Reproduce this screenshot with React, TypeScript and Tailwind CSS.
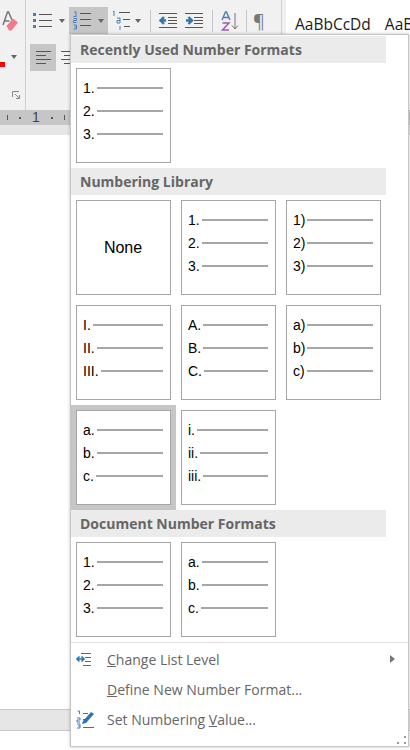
const sans = "font-['Open_Sans',sans-serif]"

const recent = [['1.', '2.', '3.']]
const library = [
  null,
  ['1.', '2.', '3.'],
  ['1)', '2)', '3)'],
  ['I.', 'II.', 'III.'],
  ['A.', 'B.', 'C.'],
  ['a)', 'b)', 'c)'],
  ['a.', 'b.', 'c.'],
  ['i.', 'ii.', 'iii.'],
]
const documentFormats = [['1.', '2.', '3.'], ['a.', 'b.', 'c.']]

function Caret() {
  return <span className="w-0 h-0 border-x-[3.5px] border-x-transparent border-t-[4px] border-t-[#666]" />
}

function Sep() {
  return <span className="w-px h-[22px] bg-[#c6c6c6] self-center" />
}

function Tile({ labels, selected }: { labels: string[] | null; selected?: boolean }) {
  return (
    <div
      className={`w-[95px] h-[95px] bg-white border border-[#a6a6a6] pl-[6px] pr-[7px] pt-[7px] font-['Liberation_Sans',sans-serif] text-[14px] text-black ${
        selected ? 'ring-[5px] ring-[#c6c6c6]' : ''
      }`}
    >
      {labels ? (
        labels.map((label) => (
          <div key={label} className="h-[23px] flex items-center gap-[2px] leading-none">
            <span>{label}</span>
            <span className="flex-1 h-[2px] bg-[#a6a6a6]" />
          </div>
        ))
      ) : (
        <div className="h-[79px] flex items-center justify-center text-[16px]">None</div>
      )}
    </div>
  )
}

function Heading({ children }: { children: string }) {
  return (
    <div className={`h-[27px] w-[315px] bg-[#ebebeb] pl-[9px] flex items-center text-[14px] font-bold text-[#666] ${sans}`}>
      {children}
    </div>
  )
}

function TileGrid({ items, selectedIndex }: { items: (string[] | null)[]; selectedIndex?: number }) {
  return (
    <div className="grid grid-cols-[95px_95px_95px] gap-[10px] pl-[5px] py-[5px]">
      {items.map((labels, i) => (
        <Tile key={i} labels={labels} selected={i === selectedIndex} />
      ))}
    </div>
  )
}

function MenuRow({ icon, children, arrow }: { icon?: React.ReactNode; children: React.ReactNode; arrow?: boolean }) {
  return (
    <div className={`h-[30px] flex items-center text-[14px] text-[#666] ${sans}`}>
      <span className="w-[36px] pl-[5px] flex justify-start">{icon}</span>
      <span className="flex-1">{children}</span>
      {arrow && <span className="mr-[13px] w-0 h-0 border-y-[4px] border-y-transparent border-l-[5px] border-l-[#777]" />}
    </div>
  )
}

function NumberListIcon() {
  return (
    <svg width="19" height="19" viewBox="0 0 19 19">
      <path d="M8 2.500h11M8 8.500h11M8 14.500h11" stroke="#555" strokeWidth="1" />
      <path d="M2 1h2v4M1.500 5.500h3M1.500 7.500h3v2h-3v2h3M1.500 14h3v4h-3M2.500 16h2" stroke="#4a7ebb" strokeWidth="1" fill="none" />
    </svg>
  )
}

export default function App() {
  return (
    <div className="relative w-[410px] h-[750px] overflow-hidden bg-white">
      {/* ribbon */}
      <div className="h-[110px] bg-[#f1f1f1] flex">
        <div className="w-[26px] border-r border-[#d0d0d0] relative">
          <svg width="18" height="21" viewBox="0 0 18 21" className="absolute left-[1px] top-[11px]">
            <path d="M2 14L6.500 1h1L11 9M3.500 10h5" stroke="#777" strokeWidth="1.500" fill="none" />
            <path d="M5.500 15L12 7.500 17 11.500 10.500 19.500H8z" fill="#ef7b8c" />
          </svg>
          <span className="absolute left-0 top-[62px] w-[5px] h-[5px] bg-[#ff0000]" />
          <span className="absolute left-[11px] top-[55px] flex"><Caret /></span>
          <svg width="8" height="8" viewBox="0 0 8 8" className="absolute left-[12px] top-[91px]">
            <path d="M.5 6V.5H7M3 3l4 4M4 7.500h3.500V4" stroke="#888" fill="none" />
          </svg>
        </div>
        <div className="w-[256px] border-r border-[#d0d0d0] pl-[4px]">
          <div className="h-[27px] mt-[7px] flex items-stretch">
            <div className="w-[39px] flex items-center gap-[7px] pl-[3px]">
              <svg width="19" height="17" viewBox="0 0 19 17">
                <path d="M6 2.500h13M6 8.500h13M6 14.500h13" stroke="#555" />
                <path d="M0 2.500h3M0 8.500h3M0 14.500h3" stroke="#4a7ebb" strokeWidth="3" />
              </svg>
              <Caret />
            </div>
            <div className="w-[39px] bg-[#c6c6c6] flex items-center gap-[7px] pl-[3px]">
              <NumberListIcon />
              <Caret />
            </div>
            <div className="w-[42px] flex items-center gap-[4px] pl-[4px]">
              <svg width="19" height="19" viewBox="0 0 19 19">
                <path d="M7 1.500h11M11 8.500h7M12 15.500h6" stroke="#555" />
                <path d="M2 0v5M1 1l1-1M5 7h3v5H5V9.500h3M8 14h0M8 15v4" stroke="#4a7ebb" fill="none" />
              </svg>
              <Caret />
            </div>
            <Sep />
            <div className="w-[61px] flex items-center gap-[8px] pl-[8px]">
              <svg width="18" height="15" viewBox="0 0 18 15">
                <path d="M0 .5h18M9 4.500h9M9 7.500h9M9 10.500h9M0 14.500h18" stroke="#555" />
                <path d="M7 7.500H2M5 4L1.500 7.500 5 11" stroke="#2e75b6" strokeWidth="2.400" fill="none" />
              </svg>
              <svg width="18" height="15" viewBox="0 0 18 15">
                <path d="M0 .5h18M9 4.500h9M9 7.500h9M9 10.500h9M0 14.500h18" stroke="#555" />
                <path d="M1 7.500h5M3.500 4L7 7.500 3.500 11" stroke="#2e75b6" strokeWidth="2.400" fill="none" />
              </svg>
            </div>
            <Sep />
            <div className="w-[33px] flex items-center justify-center">
              <svg width="18" height="20" viewBox="0 0 18 20">
                <path d="M1 9L4.500 1h1L9 9M2.500 6.500h5" stroke="#4a7ebb" strokeWidth="1.400" fill="none" />
                <path d="M1.500 12h6.500L1.500 19H8" stroke="#9b59b6" strokeWidth="1.400" fill="none" />
                <path d="M14 2v16M11 14.500l3 3.500 3-3.500" stroke="#777" fill="none" />
              </svg>
            </div>
            <Sep />
            <div className={`w-[24px] flex items-center justify-center text-[18px] text-[#777] leading-none ${sans}`}>¶</div>
          </div>
          <div className="mt-[10px] flex items-center gap-[5px]">
            <div className="w-[26px] h-[27px] bg-[#c6c6c6] flex items-center justify-center">
              <svg width="15" height="13" viewBox="0 0 15 13">
                <path d="M0 .5h15M0 4.500h10M0 8.500h15M0 12.500h10" stroke="#555" />
              </svg>
            </div>
            <svg width="15" height="13" viewBox="0 0 15 13">
              <path d="M0 .5h15M3 4.500h9M0 8.500h15M3 12.500h9" stroke="#555" />
            </svg>
          </div>
        </div>
        <div className={`flex-1 ml-[4px] bg-white pl-[9px] pt-[13px] flex gap-[14px] text-[15.5px] text-[#1a1a1a] whitespace-nowrap overflow-hidden ${sans}`}>
          <span>AaBbCcDd</span>
          <span>AaB</span>
        </div>
      </div>
      {/* ruler */}
      <div className="h-[15px] bg-[#c6c6c6] flex items-center gap-[11px] pl-[7px] text-[14px] text-[#444] font-['Liberation_Sans',sans-serif]">
        <span className="w-px h-[5px] bg-[#555]" />
        <span className="w-[2px] h-[2px] bg-[#555]" />
        <span>1</span>
        <span className="w-[2px] h-[2px] bg-[#555]" />
        <span className="w-px h-[5px] bg-[#555]" />
      </div>
      <div className="h-[10px] bg-[#e6e6e6]" />
      <div className="h-[574px]" />
      {/* status bar */}
      <div className="h-[22px] bg-[#e6e6e6] border-y border-[#c6c6c6]" />

      {/* numbering dropdown */}
      <div className="absolute left-[70px] top-[34px] w-[339px] h-[713px] bg-white border border-[#c6c6c6] pt-[1px] shadow-[0_0_3px_rgba(0,0,0,0.25)]">
        <Heading>Recently Used Number Formats</Heading>
        <TileGrid items={recent} />
        <Heading>Numbering Library</Heading>
        <TileGrid items={library} selectedIndex={6} />
        <Heading>Document Number Formats</Heading>
        <TileGrid items={documentFormats} />
        <div className="border-t border-[#e1e1e1] pt-[1px]">
          <MenuRow
            arrow
            icon={
              <svg width="16" height="13" viewBox="0 0 16 13">
                <path d="M5 .5h10M9 4.500h6M9 8.500h6M7 12.500h8" stroke="#666" />
                <path d="M1 6h7M3.500 3.500L1 6l2.500 2.500M5.500 3.500L8 6 5.500 8.500" stroke="#2e75b6" strokeWidth="1.600" fill="none" />
              </svg>
            }
          >
            <u>C</u>hange List Level
          </MenuRow>
          <MenuRow>
            <u>D</u>efine New Number Format...
          </MenuRow>
          <MenuRow
            icon={
              <svg width="19" height="19" viewBox="0 0 19 19">
                <path d="M7 3.500h5M7 9.500h2M7 17.500h11" stroke="#666" />
                <path d="M1.500 1h2v3M1 8h3v2H1v2h3M1 14h3v4H1M2 16h2" stroke="#4a7ebb" fill="none" />
                <path d="M6 14l1-3 8-9 3 2-8 9z" fill="#2e75b6" />
              </svg>
            }
          >
            Set Numbering <u>V</u>alue...
          </MenuRow>
        </div>
        <svg width="10" height="9" viewBox="0 0 10 9" className="absolute right-[1px] bottom-[1px]">
          <path d="M7 0h2v2H7zM0 6h2v2H0zM7 6h2v2H7z" fill="#999" />
        </svg>
      </div>
    </div>
  )
}
